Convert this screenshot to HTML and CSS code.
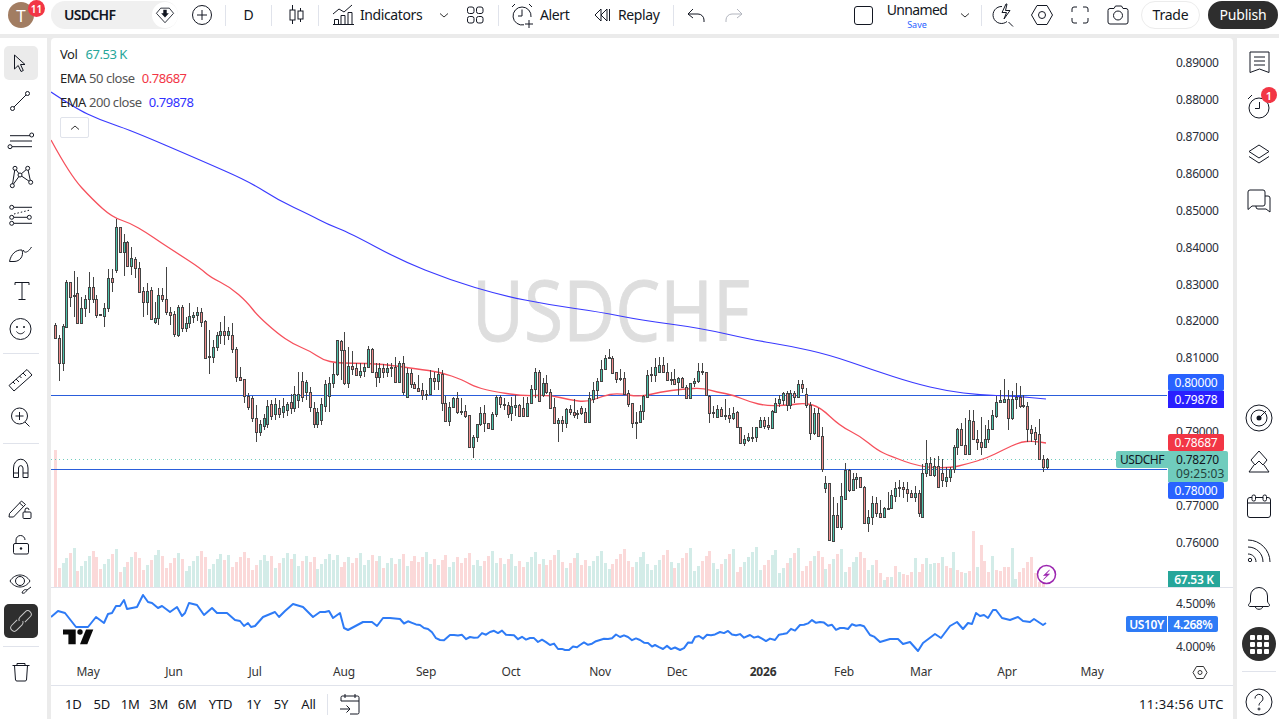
FILE: index.html
```html
<!DOCTYPE html>
<html lang="en">
<head>
<meta charset="utf-8">
<title>USDCHF</title>
<link rel="stylesheet" href="styles.css">
</head>
<body>
<div class="app">
  <header class="top">
    <div class="avatar"><span class="face">T</span><span class="badge">11</span></div>
    <div class="symbol"><span class="sym-name">USDCHF</span>
      <span class="sym-gem"><svg class="ic" viewBox="0 0 28 28"><path d="M9 6h10l5 6-10 11L4 12z"/><path d="M12 8h4v4h2.500L14 17l-4.500-5H12z" class="solid"/></svg></span>
    </div>
    <div class="tb w47"><svg class="ic" viewBox="0 0 28 28"><circle cx="14" cy="14" r="9.5"/><path d="M14 9v10M9 14h10"/></svg></div>
    <i class="dv"></i>
    <div class="tb w45 txt">D</div>
    <i class="dv"></i>
    <div class="tb w46"><svg class="ic" viewBox="0 0 28 28"><path d="M11.5 4v5M11.5 23v-4M19.5 7v3M19.5 21v-3"/><rect x="9" y="9" width="5" height="10"/><rect x="17" y="10" width="5" height="8"/></svg></div>
    <i class="dv"></i>
    <div class="tb indicators"><svg class="ic" viewBox="0 0 28 28"><path d="M3 13l6-5 5 3 8-7"/><path d="M4.500 23.500v-5h4v5M11 23.500v-9h4v9M18 23.500v-12h4v12M3 23.500h21"/></svg><span class="txt">Indicators</span></div>
    <div class="tb w20"><svg class="ic-s" viewBox="0 0 18 18"><path d="M5 7.500l4 3.500 4-3.500"/></svg></div>
    <div class="tb grid-btn"><svg class="ic" viewBox="0 0 28 28"><rect x="6.500" y="6" width="6.500" height="6.500" rx="2"/><rect x="15.500" y="6" width="6.500" height="6.500" rx="2"/><rect x="6.500" y="15.500" width="6.500" height="6.500" rx="2"/><rect x="15.500" y="15.500" width="6.500" height="6.500" rx="2"/></svg></div>
    <i class="dv"></i>
    <div class="tb alert"><svg class="ic" viewBox="0 0 28 28"><path d="M23 16a9 9 0 1 0-7 7.800"/><path d="M14 8.500V15h-4M4 6l3-3M24 6l-3-3M21 19v8M17 23h8"/></svg><span class="txt">Alert</span></div>
    <div class="tb replay"><svg class="ic" viewBox="0 0 28 28"><path d="M14 8l-6 6 6 6zM20 8l-6 6 6 6zM22.500 8v12"/></svg><span class="txt">Replay</span></div>
    <i class="dv"></i>
    <div class="tb undo"><svg class="ic" viewBox="0 0 28 28"><path d="M11 8l-5 5 5 4M6 13h10a6 6 0 0 1 6 6v2"/></svg></div>
    <div class="tb redo"><svg class="ic faint" viewBox="0 0 28 28"><path d="M17 8l5 5-5 4M22 13H12a6 6 0 0 0-6 6v2"/></svg></div>
    <div class="fill"></div>
    <div class="tb w27"><span class="square"></span></div>
    <div class="layout"><span class="lay-name">Unnamed</span><span class="lay-save">Save</span></div>
    <div class="tb w15"><svg class="ic-s" viewBox="0 0 18 18"><path d="M5 7.500l4 3.500 4-3.500"/></svg></div>
    <i class="dv dv-gap"></i>
    <div class="tb w41"><svg class="ic" viewBox="0 0 28 28"><path d="M13 5.500a8.500 8.500 0 1 0 5 15M19.500 21l4.500 4.500"/><path d="M17 3l-4 8.500h4.500L15 18l6-8.500h-4.500L18 3z"/></svg></div>
    <div class="tb w38"><svg class="ic" viewBox="0 0 28 28"><path d="M9 4.500h10l5.500 9.500L19 23.500H9L3.500 14z"/><circle cx="14" cy="14" r="3.500"/></svg></div>
    <div class="tb w38"><svg class="ic" viewBox="0 0 28 28"><path d="M11 6H8a2 2 0 0 0-2 2v3M17 6h3a2 2 0 0 1 2 2v3M22 17v3a2 2 0 0 1-2 2h-3M11 22H8a2 2 0 0 1-2-2v-3"/></svg></div>
    <div class="tb w38"><svg class="ic" viewBox="0 0 28 28"><path d="M4 9.500a2 2 0 0 1 2-2h4l1.500-2.500h6L19 7.500h3a2 2 0 0 1 2 2V21a2 2 0 0 1-2 2H6a2 2 0 0 1-2-2z"/><circle cx="14" cy="14.500" r="4.500"/></svg></div>
    <div class="pill trade">Trade</div>
    <div class="pill publish">Publish</div>
  </header>

  <nav class="left">
    <div class="lb on"><svg class="ic" viewBox="0 0 28 28"><path d="M8.500 6V20l3.700-3.500 2.800 6 2.300-1-2.800-6H19z"/></svg></div>
    <div class="lb"><svg class="ic" viewBox="0 0 28 28"><path d="M8 20L20 8"/><circle cx="6.500" cy="21.500" r="2"/><circle cx="21.500" cy="6.500" r="2"/></svg></div>
    <div class="lb"><svg class="ic" viewBox="0 0 28 28"><path d="M4 10.700h20M4 16h22M6 21.700h20"/><circle cx="25.700" cy="10" r="2"/><circle cx="4" cy="21.700" r="2"/></svg></div>
    <div class="lb"><svg class="ic" viewBox="0 0 28 28"><path d="M6.300 22.700L9 5.300l5 6.700 7.700-6.700 3 14L14 12z"/><circle class="wh" cx="9" cy="5.300" r="2"/><circle class="wh" cx="6.300" cy="22.700" r="2"/><circle class="wh" cx="14" cy="12" r="2"/><circle class="wh" cx="21.700" cy="5.300" r="2"/><circle class="wh" cx="24.700" cy="19.300" r="2"/></svg></div>
    <div class="lb"><svg class="ic" viewBox="0 0 28 28"><path d="M8 6.300h18M8 16.300h13M8 22.300h18"/><path d="M8 13l16-4" stroke-dasharray="1.500 2"/><circle cx="5.700" cy="6.300" r="2"/><circle cx="5.700" cy="16.300" r="2"/><circle cx="23.300" cy="16.300" r="2"/><circle cx="5.700" cy="22.300" r="2"/></svg></div>
    <div class="lb"><svg class="ic" viewBox="0 0 28 28"><path d="M3.500 22.500C5 15 10 10.500 16 11 18 17 14 22.500 8 22.500z"/><path d="M17.500 11c0 3.500 4.500 3 8-3"/></svg></div>
    <div class="lb"><svg class="ic" viewBox="0 0 28 28"><path d="M9 8V5.500h14V8M16 5.500v17M12.500 22.500h7"/></svg></div>
    <div class="lb"><svg class="ic" viewBox="0 0 28 28"><circle cx="14.500" cy="14" r="10.500"/><circle class="solid" cx="11" cy="12" r="1"/><circle class="solid" cx="18" cy="12" r="1"/><path d="M10.500 16.500c2 3 6 3 8 0"/></svg></div>
    <i class="hr hr1"></i>
    <div class="lb"><svg class="ic" viewBox="0 0 28 28"><path d="M3 20.500L21 4.500l5 5.500-18 16z"/><path d="M7 17l2 2M10 14l3 3M13.500 11l2 2M17 8l3 3"/></svg></div>
    <div class="lb"><svg class="ic" viewBox="0 0 28 28"><circle cx="13.500" cy="13" r="8"/><path d="M13.500 9v8M9.500 13h8M19 19l4.500 4.500"/></svg></div>
    <i class="hr hr2"></i>
    <div class="lb"><svg class="ic" viewBox="0 0 28 28"><path d="M7.500 22.500V13a7 8.500 0 0 1 14.500 0v9.500h-5V13a2.300 3 0 0 0-4.500 0v9.500zM7.500 18H12.500M17 18h5"/></svg></div>
    <div class="lb"><svg class="ic" viewBox="0 0 28 28"><path d="M3.500 20.500L15.500 8l4 3.500L7.500 24l-4.500 0z"/><path d="M13.500 10l4 3.500"/><rect x="17" y="19" width="8" height="6.500" rx="1"/><path d="M19 19v-2a2 2 0 0 1 4 0"/></svg></div>
    <div class="lb"><svg class="ic" viewBox="0 0 28 28"><rect x="7.500" y="12.500" width="15" height="10.500" rx="1.500"/><path d="M10 12.500V9a4.500 4.500 0 0 1 9 0"/><circle class="solid" cx="15" cy="17.500" r="1.200"/></svg></div>
    <div class="lb"><svg class="ic" viewBox="0 0 28 28"><path d="M4 12c5-8 15-8 20 0-5 8-15 8-20 0z"/><circle cx="14" cy="12" r="4.500"/><path d="M16 24c1-3 3-4 5-3-1 2-3 4-5 3zM21 21l4-3"/></svg></div>
    <div class="lb dark"><svg class="ic" viewBox="0 0 28 28"><g transform="rotate(-45 14 14)"><path d="M12 10.500H4.500a3.500 3.500 0 0 0 0 7H12a3.500 3.500 0 0 0 3.300-2.300"/><path d="M16 17.500h7.500a3.500 3.500 0 0 0 0-7H16a3.500 3.500 0 0 0-3.300 2.300"/></g></svg></div>
    <i class="hr hr3"></i>
    <div class="lb"><svg class="ic" viewBox="0 0 28 28"><path d="M6.500 7.500h17M8.500 7.500l1 14.500a1.500 1.500 0 0 0 1.500 1h8a1.500 1.500 0 0 0 1.500-1l1-14.500M11 7.500V5.500h8v2"/></svg></div>
  </nav>

  <main class="panel">
    <div class="chart" id="chart">
      <svg class="plot" id="plot" viewBox="51 38 1182 648" width="1182" height="648">
        <text class="mark" x="472" y="341" textLength="278" lengthAdjust="spacingAndGlyphs">USDCHF</text>
        <g id="layer"></g>
        <g class="prices">
          <text x="1176" y="67">0.89000</text><text x="1176" y="104">0.88000</text><text x="1176" y="141">0.87000</text><text x="1176" y="178">0.86000</text><text x="1176" y="215">0.85000</text><text x="1176" y="252">0.84000</text><text x="1176" y="289">0.83000</text><text x="1176" y="325">0.82000</text><text x="1176" y="362">0.81000</text><text x="1176" y="436">0.79000</text><text x="1176" y="510">0.77000</text><text x="1176" y="547">0.76000</text><text x="1176" y="608">4.500%</text><text x="1176" y="651">4.000%</text>
        </g>
        <g class="times">
          <text x="88" y="676">May</text><text x="174" y="676">Jun</text><text x="255" y="676">Jul</text><text x="344" y="676">Aug</text><text x="426" y="676">Sep</text><text x="511" y="676">Oct</text><text x="600" y="676">Nov</text><text x="677" y="676">Dec</text><text class="yr" x="763" y="676">2026</text><text x="844" y="676">Feb</text><text x="921" y="676">Mar</text><text x="1007" y="676">Apr</text><text x="1092" y="676">May</text>
        </g>
        <path class="sep" d="M51 587.500H1233"/>
        <g class="gear"><path d="M1196.500 666.500h7l3.500 6-3.500 6h-7l-3.500-6z"/><circle cx="1200" cy="672.500" r="2"/></g>
        <g class="tvlogo"><path d="M63 629.500h12.700v14.700h-7.300v-9.700H63z"/><circle cx="80" cy="632" r="2.700"/><path d="M86 629.500h7.300l-6 14.700H80z"/></g>
        <g class="bolt"><circle cx="1046.500" cy="574.500" r="9"/><path d="M1049.500 570l-6 5.500h3.500l-3.500 4 6-5.500h-3.500z"/></g>
      </svg>
      <div class="legend">
        <div class="lg-row"><span class="lg-a">Vol</span><span class="v-teal">67.53 K</span></div>
        <div class="lg-row"><span class="lg-a">EMA</span><span class="lg-b">50 close</span><span class="v-red">0.78687</span></div>
        <div class="lg-row"><span class="lg-a">EMA</span><span class="lg-b">200 close</span><span class="v-blue">0.79878</span></div>
        <div class="collapse"><svg class="ic-s" viewBox="0 0 18 18"><path d="M5 10.500l4-3.500 4 3.500"/></svg></div>
      </div>
      <div class="tag t-blue t1">0.80000</div>
      <div class="tag t-indigo t2">0.79878</div>
      <div class="tag t-red t3">0.78687</div>
      <div class="tag t-sym">USDCHF</div>
      <div class="tag t-last"><span>0.78270</span><span class="cd">09:25:03</span></div>
      <div class="tag t-blue t4">0.78000</div>
      <div class="tag t-vol">67.53 K</div>
      <div class="tag t-us a">US10Y</div>
      <div class="tag t-us b">4.268%</div>
    </div>
    <footer class="bottom">
      <span class="rg">1D</span><span class="rg">5D</span><span class="rg">1M</span><span class="rg">3M</span><span class="rg">6M</span><span class="rg wide">YTD</span><span class="rg y1">1Y</span><span class="rg y5">5Y</span><span class="rg y1">All</span>
      <i class="dv dv-b"></i>
      <svg class="ic cal" viewBox="0 0 28 28"><path d="M5 11V7.500a1.500 1.500 0 0 1 1.500-1.500h15A1.500 1.500 0 0 1 23 7.500v15a1.500 1.500 0 0 1-1.500 1.500H14M5 11h18M9 4v4M19 4v4M4 19h10M10.500 15.500L14 19l-3.500 3.500"/></svg>
      <div class="fill"></div>
      <span class="clock">11:34:56 UTC</span>
    </footer>
  </main>

  <aside class="right">
    <div class="rb r1"><svg class="ic" viewBox="0 0 28 28"><path d="M5 4h19v20.500l-9.500-3.500L5 24.500zM9 9h11M9 13h11M9 17h11"/></svg></div>
    <div class="rb r2"><svg class="ic" viewBox="0 0 28 28"><circle cx="14" cy="15" r="10"/><path d="M14.500 9v6.500H10M3 6l4-4"/></svg><span class="badge rbadge">1</span></div>
    <div class="rb r3"><svg class="ic" viewBox="0 0 28 28"><path d="M14 5l10 6.500-10 6.500L4 11.500zM4 16.500l10 6.500 10-6.500"/></svg></div>
    <div class="rb r4"><svg class="ic" viewBox="0 0 28 28"><path d="M3 6a2 2 0 0 1 2-2h13a2 2 0 0 1 2 2v12a2 2 0 0 1-2 2H7l-4 3.500z"/><path d="M20 10h3a2 2 0 0 1 2 2v14l-4-3H13a2 2 0 0 1-2-2v-1"/></svg></div>
    <div class="fill"></div>
    <div class="rb r5"><svg class="ic" viewBox="0 0 28 28"><circle cx="14" cy="14" r="13"/><circle cx="14" cy="14" r="8"/><circle class="solid" cx="14" cy="14" r="2.500"/><path d="M14 14l7-7"/></svg></div>
    <div class="rb r6"><svg class="ic" viewBox="0 0 28 28"><path d="M14 4l-8 9 4 5 4-4 4 4 4-5zM9 18l-5 7h20l-5-7"/></svg></div>
    <div class="rb r7"><svg class="ic" viewBox="0 0 28 28"><rect x="2.500" y="5.500" width="23" height="20" rx="2.500"/><path d="M2.500 11h23"/><rect class="wh" x="7" y="3" width="3.500" height="6" rx="1.500"/><rect class="wh" x="18" y="3" width="3.500" height="6" rx="1.500"/></svg></div>
    <div class="rb r8"><svg class="ic" viewBox="0 0 28 28"><path d="M3 3c12 0 22 10 22 22M3 10c8.500 0 15 6.500 15 15M3 17c4.500 0 8 3.500 8 8"/><circle cx="5" cy="23" r="1.700"/></svg></div>
    <div class="rb r9"><svg class="ic" viewBox="0 0 28 28"><path d="M3.500 22c0-1 2-2 2-4v-5a8.500 8.500 0 0 1 17 0v5c0 2 2 3 2 4s-.5 1.500-1.500 1.500H5c-1 0-1.500-.5-1.500-1.500zM10.500 24c0 3 7 3 7 0"/></svg></div>
    <div class="rb r10"><span class="apps"><b></b><b></b><b></b><b></b><b></b><b></b><b></b><b></b><b></b></span></div>
    <i class="hr hr-r"></i>
    <div class="rb r11"><svg class="ic" viewBox="0 0 28 28"><circle cx="14" cy="14" r="13"/><path d="M10 10.500a4 4 0 1 1 6.500 3c-1.500 1.200-2.500 2-2.500 4"/><circle cx="14" cy="21" r="1"/></svg></div>
  </aside>
</div>
<script src="chart.js"></script>
</body>
</html>
```
FILE: styles.css
```css
* { box-sizing: border-box; }
html, body { margin: 0; height: 100%; }
body { background: #ebebeb; font-family: "Noto Sans", "Liberation Sans", sans-serif; color: #131722; overflow: hidden; }
.app {
  width: 1279px; height: 719px;
  display: grid;
  grid-template-columns: 47px 1fr 42px;
  grid-template-rows: 34px 1fr;
  column-gap: 4px; row-gap: 4px;
}
.ic { width: 28px; height: 28px; fill: none; stroke: #131722; stroke-width: 1; flex: none; }
.ic-s { width: 18px; height: 18px; fill: none; stroke: #333; stroke-width: 1; flex: none; }
.ic .solid { fill: #131722; stroke: none; }
.ic .wh { fill: #fff; }
.faint { stroke: #b2b5be; }
.fill { flex: 1; }
.top { grid-column: 1 / 4; background: #fff; display: flex; align-items: flex-start; padding: 1px 1px 0 0; height: 34px; }
.tb { height: 28px; display: flex; align-items: center; justify-content: center; flex: none; }
.txt { font-size: 14px; letter-spacing: -.4px; padding-bottom: 2px; }
.dv { width: 1px; height: 21px; background: #e0e3eb; margin-top: 4px; flex: none; }
.dv-gap { margin-left: 9px; }
.w20 { width: 20px; } .w15 { width: 15px; } .w27 { width: 27px; } .w38 { width: 38px; } .w41 { width: 41px; } .w45 { width: 45px; } .w46 { width: 46px; } .w47 { width: 47px; }
.avatar { width: 51px; height: 28px; position: relative; flex: none; }
.face { position: absolute; left: 8px; top: 1px; width: 26px; height: 26px; border-radius: 50%; background: #a27d62; color: #fff; font-size: 17px; display: flex; align-items: center; justify-content: center; }
.badge { position: absolute; left: 28px; top: -1px; width: 17px; height: 17px; border-radius: 50%; background: #f23645; color: #fff; font-size: 10px; font-weight: 600; display: flex; align-items: center; justify-content: center; }
.symbol { width: 127px; height: 28px; border-radius: 14px; background: #f0f0f0; display: flex; align-items: center; justify-content: space-between; padding-left: 13px; flex: none; }
.sym-name { font-size: 14px; font-weight: 600; letter-spacing: -.7px; padding-bottom: 1px; }
.sym-gem { width: 26px; height: 26px; margin-right: 0; border-radius: 50%; background: #fff; display: flex; align-items: center; justify-content: center; }
.sym-gem .ic { width: 24px; height: 24px; }
.indicators { width: 104px; padding-left: 11px; justify-content: flex-start; gap: 2px; }
.indicators + .w20 { margin-left: 11px; }
.grid-btn { width: 28px; margin-left: 7px; margin-right: 9px; }
.alert { width: 81px; padding-left: 9px; justify-content: flex-start; gap: 4px; }
.replay { width: 93px; padding-left: 7px; justify-content: flex-start; gap: 3px; }
.undo { width: 44px; } .redo { width: 32px; }
.square { width: 19px; height: 19px; border: 1px solid #131722; border-radius: 3px; display: block; }
.layout { width: 80px; height: 28px; display: flex; flex-direction: column; align-items: center; }
.lay-name { font-size: 14px; line-height: 18px; letter-spacing: -.65px; }
.lay-save { font-size: 9px; line-height: 11px; color: #2962ff; }
.pill { height: 28px; border-radius: 14px; font-size: 14px; display: flex; align-items: center; justify-content: center; flex: none; letter-spacing: -.2px; padding-bottom: 1px; }
.trade { width: 59px; margin-left: 4px; border: 1px solid #ececec; }
.publish { width: 70px; margin-left: 8px; background: #2e2e2e; color: #fff; }

.left { background: #fff; display: flex; flex-direction: column; align-items: flex-start; padding: 8px 0 0 4px; height: 681px; }
.lb { width: 34px; height: 34px; flex: none; margin-bottom: 4px; display: flex; align-items: center; justify-content: center; border-radius: 5px; }
.lb .ic { margin-left: -2px; }
.lb.on { background: #ebebeb; }
.lb.dark { background: #2e2e2e; }
.lb.dark .ic { stroke: #c9c9c9; margin-left: 0; }
.hr { display: block; width: 36px; height: 1px; background: #e0e3eb; flex: none; }
.hr1 { margin: 3px 0 8px -1px; }
.hr2 { margin: 5px 0 8px -1px; }
.hr3 { margin: 4px 0 8px -1px; }

.panel { background: #fff; border-radius: 4px 4px 0 0; display: flex; flex-direction: column; height: 681px; }
.chart { position: relative; height: 648px; flex: none; overflow: hidden; border-bottom: 1px solid #e0e3eb; }
.plot { display: block; }
.mark { font-family: "Noto Sans", sans-serif; font-size: 84px; fill: #dedede; stroke: #dedede; stroke-width: .8; }
.prices text { font-size: 12px; fill: #2a2e39; letter-spacing: -.25px; }
.times text { font-size: 12px; fill: #333; text-anchor: middle; letter-spacing: -.2px; }
.times .yr { font-weight: 700; }
.sep { stroke: #e0e3eb; stroke-width: 1; }
.gear path, .gear circle { fill: none; stroke: #333; stroke-width: 1; }
.tvlogo path, .tvlogo circle { fill: #0a0a0a; }
.bolt circle { fill: #fff; stroke: #9c27b0; stroke-width: 1.5; }
.bolt path { fill: #9c27b0; stroke: #9c27b0; stroke-width: .6; }

.legend { position: absolute; left: 9px; top: 4px; display: flex; flex-direction: column; align-items: flex-start; font-size: 13px; letter-spacing: -.45px; }
.lg-row { height: 24px; display: flex; align-items: center; gap: 3px; }
.lg-a { color: #222; }
.lg-b { color: #555; }
.v-teal { color: #26a69a; margin-left: 5px; }
.v-red { color: #f23645; margin-left: 4px; }
.v-blue { color: #3030ff; margin-left: 4px; }
.collapse { width: 29px; height: 21px; margin-top: 3px; border: 1px solid #e0e3eb; border-radius: 2px; background: #fff; display: flex; align-items: center; justify-content: center; }

.tag { position: absolute; display: flex; align-items: center; justify-content: center; font-size: 12px; color: #fff; height: 17px; width: 56px; left: 1117px; letter-spacing: -.2px; }
.t-blue { background: #2962ff; border-radius: 2px; }
.t-indigo { background: #2a1fff; }
.t-red { background: #f23645; border-radius: 2px; }
.t1 { top: 336px; }
.t2 { top: 353px; }
.t3 { top: 396px; }
.t4 { top: 444px; }
.t-sym { left: 1065px; top: 413px; width: 52px; background: #70ccbd; color: #131722; border-radius: 2px 0 0 2px; letter-spacing: -.5px; }
.t-last { top: 413px; width: 60px; height: 31px; background: #70ccbd; color: #131722; flex-direction: column; align-items: flex-start; padding-left: 8px; line-height: 14px; border-radius: 0 2px 2px 0; }
.t-last .cd { color: #24433d; letter-spacing: .1px; }
.t-vol { top: 533px; width: 52px; height: 16px; background: #26a69a; letter-spacing: -.3px; font-weight: 600; }
.t-us { background: #2e7bf6; height: 16px; top: 578px; font-weight: 600; letter-spacing: -.4px; }
.t-us.a { left: 1075px; width: 41px; border-radius: 2px 0 0 2px; }
.t-us.b { left: 1117px; width: 50px; border-radius: 0 2px 2px 0; }

.bottom { height: 33px; display: flex; align-items: center; padding: 3px 9px 0 8px; font-size: 13px; letter-spacing: -.2px; }
.rg { width: 28.500px; text-align: center; flex: none; }
.rg.wide { width: 38px; }
.rg.y1 { width: 28px; }
.rg.y5 { width: 27px; }
.dv-b { height: 21px; margin: 0 1px 0 4.500px; }
.cal { margin-left: 7px; }
.clock { font-size: 13px; letter-spacing: .45px; }

.right { background: #fff; display: flex; flex-direction: column; align-items: center; padding: 6px 0 1px 2px; height: 681px; }
.rb { width: 36px; height: 36px; flex: none; display: flex; align-items: center; justify-content: center; position: relative; }
.r1 { margin-bottom: 9px; }
.r2 { margin-bottom: 11px; }
.r3 { margin-bottom: 10px; }
.r5 { margin-bottom: 7px; }
.r6, .r7 { margin-bottom: 9px; }
.r8 { margin-bottom: 10px; }
.r9 { margin-bottom: 11px; }
.rbadge { left: 20px; top: -2px; width: 16px; height: 16px; font-size: 11px; }
.apps { width: 34px; height: 34px; border-radius: 50%; background: #2e2e2e; display: grid; grid-template-columns: repeat(3, 5px); grid-auto-rows: 5px; gap: 2px; align-content: center; justify-content: center; }
.apps b { background: #fff; border-radius: 1px; }
.hr-r { margin: 9px 0 14px; width: 34px; }
.r11 { height: 32px; }
```
FILE: chart.js
```js
// OHLC data, in pixel rows of the plot: [high, bodyTop, bodyBottom, low, up]
var A = [[370,376,415,415,0],[405,415,488,542,0],[372,378,488,512,1],[240,246,380,380,1],[246,247,290,320,0],[213,285,288,350,1],[232,280,370,370,0],[290,325,370,370,1],[285,298,325,350,1],[217,262,298,340,1],[232,262,298,310,0],[285,297,344,355,0],[342,343,345,345,0],[310,325,347,380,1],[208,235,325,335,1],[208,235,245,275,0],[57,82,210,218,1],[80,82,157,157,0],[103,127,157,227,1],[122,127,199,199,0],[142,175,199,225,1],[170,176,205,235,0],[185,205,275,275,0],[262,272,307,352,0],[248,272,307,345,1],[262,270,358,358,0],[305,355,367,372,1],[265,286,355,375,1],[265,286,298,305,0],[202,298,335,345,0],[320,335,344,375,0],[333,343,403,410,0],[315,322,405,410,1],[315,322,385,395,0],[350,370,385,395,1],[310,347,370,385,1],[335,346,352,370,1],[320,337,346,362,1],[325,337,365,380,0],[360,363,473,473,0],[390,468,472,523,1],[420,440,470,490,1],[395,405,440,452,1],[365,393,405,432,1],[348,393,405,435,0],[380,393,405,420,1],[368,405,448,458,0],[440,448,530,545,0],[500,530,540,540,0],[537,538,588,610,0],[580,588,620,630,0]];
var A_X = [14,26,38,47,59,71,82,94,106,118,130,139,151,163,175,187,199,211,223,232,244,256,268,280,292,304,316,325,337,349,361,373,385,397,409,418,430,442,454,466,478,490,502,511,523,535,547,559,571,583,595];
var A2 = [[396,398,418,422,0],[405,418,432,442,0],[420,424,432,436,1],[414,418,426,430,1],[400,406,424,428,1],[400,404,416,420,0],[398,404,414,420,1],[400,408,414,418,0],[398,406,412,418,1],[402,404,410,416,1],[394,402,408,414,0],[386,394,408,412,1],[372,394,400,408,1],[372,381,397,402,0],[380,382,392,400,1],[387,392,407,412,0],[402,408,424,428,0],[408,412,424,428,1],[398,404,420,425,1],[380,384,406,412,1],[377,383,396,412,1],[363,374,383,388,1],[340,340,374,376,1],[340,341,350,380,0],[332,350,383,385,0],[347,366,383,388,1]];
var B = [[33,78,88,105,0],[70,85,104,108,0],[68,94,104,115,1],[68,82,94,110,1],[18,28,82,85,1],[25,28,97,97,0],[70,97,110,140,0],[70,85,110,128,1],[72,85,97,115,0],[70,85,97,110,1],[70,82,83,110,1],[50,82,125,128,0],[62,70,125,128,1],[48,70,157,165,0],[85,100,170,170,1],[88,100,133,145,0],[125,133,145,148,0],[105,145,152,155,0],[128,150,165,180,0],[150,162,163,180,1],[90,115,163,165,1],[95,115,122,150,0],[85,102,122,150,1],[90,102,190,212,0],[168,190,243,245,0],[185,202,242,257,1],[170,175,202,205,1],[157,175,215,222,0],[175,213,215,225,0],[195,213,228,235,0],[225,226,322,322,0],[285,290,322,353,1],[252,253,290,305,1],[200,220,253,258,1],[195,220,250,275,0],[248,250,265,268,0],[215,223,266,268,1],[165,172,223,230,1],[165,172,193,205,0],[175,193,194,210,1],[185,195,222,235,0],[170,198,220,243,1],[165,196,200,228,1],[192,196,227,227,0],[170,204,227,228,0],[170,190,227,232,1],[135,148,190,192,1],[83,97,148,175,1],[90,97,182,185,0],[115,130,165,172,1],[105,130,155,162,0],[148,155,203,205,0],[173,202,248,250,0],[235,240,248,305,1],[228,241,250,275,0],[205,207,250,265,1],[195,207,215,225,0],[178,215,224,235,0],[210,220,221,238,1],[197,205,218,225,0],[205,217,246,250,0],[155,175,245,245,1],[125,150,177,190,1],[115,122,150,178,1],[60,88,122,125,1],[45,55,88,90,1],[28,52,53,55,1],[48,55,98,98,0],[95,97,118,130,0],[88,115,116,122,0],[97,115,163,165,0],[150,160,192,200,0],[190,190,248,265,0],[215,245,246,298,1],[195,212,245,245,1],[165,168,212,240,1],[90,105,170,175,1],[80,103,104,125,1],[55,80,105,125,1],[52,75,95,100,1],[52,75,95,100,0],[70,96,120,122,0],[95,116,117,135,1],[88,116,132,135,0],[112,115,125,165,1],[110,115,140,142,0],[135,140,175,175,0],[130,130,175,175,1],[115,122,130,140,1],[70,92,122,130,1],[70,92,97,105,0],[95,97,165,165,0],[165,168,218,248,0],[198,215,217,235,1],[195,208,232,235,1],[200,208,228,232,0],[178,225,226,240,1],[205,225,233,250,0],[200,218,233,240,1],[212,215,260,262,0],[260,260,308,312,0],[285,298,308,318,1],[280,290,300,305,1],[262,290,291,305,1],[260,260,290,305,1],[230,240,260,265,1],[230,240,258,268,0],[230,256,262,270,0],[210,213,263,265,1],[175,190,215,215,1],[165,178,190,200,1]];
var C = [[65,68,90,105,1],[62,68,105,122,0],[60,68,105,118,1],[62,68,80,100,0],[30,43,80,82,1],[30,43,53,70,0],[55,73,105,115,0],[95,105,190,210,0],[115,128,190,195,1],[115,128,198,200,0],[170,198,298,305,0],[318,340,355,370,1],[340,340,510,512,0],[380,435,512,515,1],[400,435,472,474,0],[340,378,472,480,1],[278,300,388,390,1],[298,300,360,365,0],[310,328,360,362,1],[310,322,328,358,1],[320,322,350,350,0],[348,350,460,460,0],[420,440,460,485,1],[378,400,440,465,1],[380,400,428,442,0],[390,428,440,445,0],[410,415,440,445,1],[365,415,416,420,1],[360,376,415,418,1],[335,355,377,395,1],[330,352,353,380,1],[335,352,358,385,0],[335,358,368,395,0],[360,368,382,385,0],[348,370,382,395,1],[360,370,428,440,0],[282,310,442,442,1],[210,278,310,320,1],[260,278,316,318,0],[265,287,316,320,1],[258,287,352,352,0],[268,310,330,350,0],[290,322,332,352,1],[290,298,322,335,1],[225,232,298,310,1],[175,178,232,255,1],[158,178,226,228,0],[145,225,252,254,0],[120,150,252,252,1],[120,152,208,210,0],[180,208,217,240,0],[140,217,230,255,0],[165,208,230,232,1],[150,178,208,218,1],[120,135,178,180,1],[78,97,137,145,1],[60,90,97,100,1],[28,88,95,97,1],[60,88,145,180,0],[62,88,145,150,1],[40,80,88,118,1],[48,80,107,115,0],[75,105,106,115,0],[95,108,178,215,0],[165,178,188,215,0],[170,186,206,225,0],[148,193,268,270,0],[255,268,290,305,0],[265,268,290,298,1]];

var RED = "51,140 70,175 93,200 112,217 130,223 147,233 160,242 177,253 200,268 210,277 230,287 247,302 257,315 277,333 293,344 310,351 323,360 337,363 350,363 383,364 417,369 440,372 463,380 473,386 490,391 523,396 550,395 570,400 587,402 603,396 617,393 640,397 660,392 683,389 703,388 717,392 733,395 750,402 767,406 790,405 805,403 820,407 840,426 860,436 877,450 890,456 920,467 950,468 967,464 987,458 1003,450 1020,442 1033,441 1046,443";
var BLUE = "51,92 75,108 100,120 130,130 200,160 250,182 278,200 310,215 327,224 350,233 400,260 450,280 500,295 550,305 600,312 640,320 700,328 753,340 790,346 830,355 873,370 913,383 947,391 980,395 1013,396 1046,399";
var YIELD = "51,617 58,611 65,613 76,627 88,627 96,617 104,623 108,614 112,613 116,606 120,606 124,600 127,609 137,607 143,595 148,602 152,603 158,608 162,606 170,612 177,607 182,616 185,613 189,603 197,605 204,615 212,608 217,613 227,613 235,620 240,621 244,626 248,623 251,627 255,626 263,617 275,612 279,617 285,611 293,604 303,607 313,617 320,612 325,612 329,611 333,618 340,613 344,628 348,630 363,622 372,622 377,626 383,618 390,618 400,619 420,625 440,640 450,635 470,637 490,632 510,635 530,638 550,645 565,650 580,645 600,640 620,637 640,640 655,645 680,650 695,637 720,632 750,635 775,640 800,625 820,622 840,628 860,625 870,635 880,642 890,639 898,639 903,644 910,642 918,651 923,643 935,634 941,638 950,626 957,622 963,629 968,623 972,624 976,613 980,616 984,615 988,618 993,610 996,610 1002,618 1010,620 1018,617 1023,621 1030,622 1034,619 1043,625 1046,623";
// [x, top row] of the most recent volume bars
var VOL_END = [[880,100],[884,120],[887,110],[891,110],[895,78],[899,97],[903,102],[907,105],[911,95],[915,55],[919,97],[922,72],[926,55],[930,72],[934,70],[938,68],[942,52],[946,78],[950,83],[953,35],[957,90],[961,95],[965,100],[969,93],[973,0],[977,80],[981,15],[984,62],[988,95],[992,48],[996,90],[1000,92],[1004,80],[1008,80],[1012,25],[1015,118],[1019,95],[1023,85],[1027,65],[1031,52],[1035,100],[1039,125],[1043,130]];

var NS = "http://www.w3.org/2000/svg";
var layer = document.getElementById("layer");
function add(tag, attrs) {
  var el = document.createElementNS(NS, tag);
  for (var k in attrs) el.setAttribute(k, attrs[k]);
  layer.appendChild(el);
  return el;
}
function parsePts(s) {
  return s.split(" ").map(function (p) { var a = p.split(","); return [+a[0], +a[1]]; });
}
// quadratic smoothing through the midpoints of a polyline
function smooth(s) {
  var p = parsePts(s), d = "M" + p[0][0] + " " + p[0][1];
  for (var i = 1; i < p.length - 1; i++) {
    d += "Q" + p[i][0] + " " + p[i][1] + " " + (p[i][0] + p[i + 1][0]) / 2 + " " + (p[i][1] + p[i + 1][1]) / 2;
  }
  return d + "L" + p[p.length - 1][0] + " " + p[p.length - 1][1];
}
// the daily yield wiggles around the sparse keypoints between x 400 and 880
function daily(s) {
  var p = parsePts(s), out = [];
  for (var i = 0; i < p.length; i++) {
    out.push(p[i]);
    if (i === p.length - 1 || p[i][0] < 400 || p[i][0] >= 880) continue;
    for (var x = p[i][0] + 4; x < p[i + 1][0] - 2; x += 4) {
      var t = (x - p[i][0]) / (p[i + 1][0] - p[i][0]);
      var w = Math.sin(x * 1.7) * 1.6 + Math.sin(x * 0.61) * 1.8;
      out.push([x, +(p[i][1] + (p[i + 1][1] - p[i][1]) * t + w).toFixed(1)]);
    }
  }
  return out.map(function (q) { return q.join(","); }).join(" ");
}
function segment(rows, x0, x1, yBase, scale, xs) {
  return rows.map(function (r, i) {
    return {
      x: xs ? x0 + xs[i] / 3 : x0 + (x1 - x0) * i / (rows.length - 1),
      hi: yBase + r[0] * scale, top: yBase + r[1] * scale,
      bot: yBase + r[2] * scale, lo: yBase + r[3] * scale, up: r[4]
    };
  });
}
var candles = [].concat(
  segment(A, 50, 0, 200, 1 / 3, A_X),
  segment(A2, 252, 348.3, 0, 1),
  segment(B, 352.3, 779.3, 340, 1 / 3),
  segment(C, 782.7, 1046.7, 370, 1 / 3)
);

// volume bars, tucked behind the price candles
candles.forEach(function (c, i) {
  if (c.x >= 878) return;
  var h = 14 + (i * 37) % 17 + (i * 13) % 11;
  if (i === 0) h = 137;
  add("rect", { x: Math.round(c.x) - 1, y: 587 - h, width: 3, height: h, fill: c.up ? "#d3ece8" : "#fbd9d9" });
});
VOL_END.forEach(function (v) {
  var top = Math.round(540 + v[1] / 3);
  var i = v[0];
  var up = [884, 891, 899, 915, 926, 930, 934, 942, 953, 965, 977, 992, 1012, 1015].indexOf(i) >= 0;
  if (i === 973 || i === 981) { up = false; top = i === 973 ? 531 : top; }
  add("rect", { x: i - 1, y: top, width: 3, height: 587 - top, fill: up ? "#d3ece8" : "#fbd9d9" });
});

add("path", { d: "M51 395.500H1167M51 469.500H1167", stroke: "#2a5ddb", "stroke-width": 1, fill: "none" });
add("path", { d: "M51 459.500H1116", stroke: "#70ccbd", "stroke-width": 1, "stroke-dasharray": "1 3", fill: "none" });
add("path", { d: smooth(RED), fill: "none", stroke: "#f6505c", "stroke-width": 1.3 });
add("path", { d: smooth(BLUE), fill: "none", stroke: "#3a3aff", "stroke-width": 1.2 });

candles.forEach(function (c) {
  var X = Math.round(c.x);
  var top = Math.round(c.top), bot = Math.max(Math.round(c.bot), top + 1);
  add("path", { d: "M" + (X + .5) + " " + Math.round(c.hi) + "V" + Math.round(c.lo), stroke: "#444", "stroke-width": 1, "shape-rendering": "crispEdges" });
  add("rect", { x: X - .5, y: top + .5, width: 2, height: bot - top, fill: c.up ? "#4cc2aa" : "#f08c8c", stroke: "#444", "stroke-width": 1, "shape-rendering": "crispEdges" });
});

add("polyline", { points: daily(YIELD), fill: "none", stroke: "#2e7bf6", "stroke-width": 2, "stroke-linejoin": "round" });
```
